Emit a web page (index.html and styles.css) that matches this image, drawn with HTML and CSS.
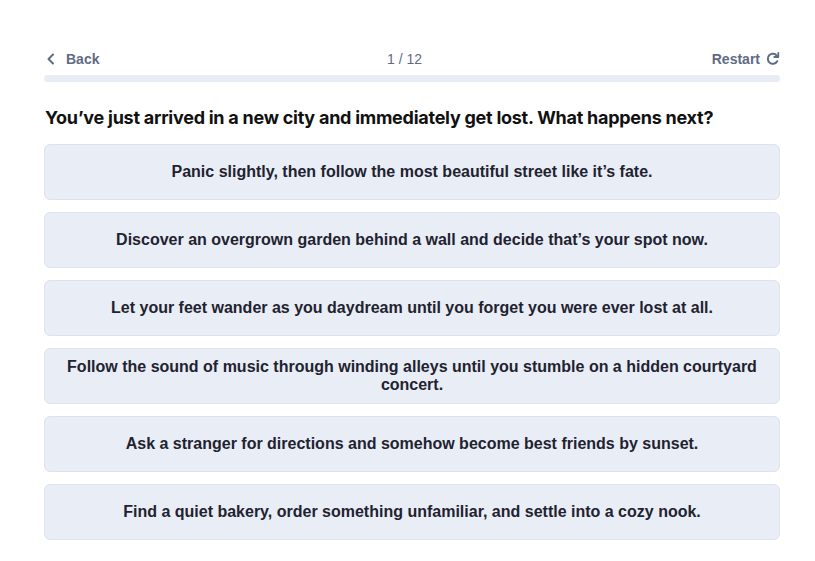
FILE: index.html
```html
<!DOCTYPE html>
<html>
<head>
<meta charset="utf-8">
<link rel="stylesheet" href="styles.css">
</head>
<body>
<div class="quiz">
  <div class="topbar">
    <button class="nav back">
      <svg width="10" height="12" viewBox="0 0 10 12"><path d="M7 1.5 L2.5 6 L7 10.5" fill="none" stroke="currentColor" stroke-width="2" stroke-linecap="round" stroke-linejoin="round"/></svg>
      <span>Back</span>
    </button>
    <div class="count">1 / 12</div>
    <button class="nav restart">
      <span>Restart</span>
      <svg width="14" height="14" viewBox="0 0 14 14"><path d="M11.2 9.2 A5 5 0 1 1 11 4" fill="none" stroke="currentColor" stroke-width="2" stroke-linecap="round"/><path d="M12.3 1 L12.3 5 L8.3 5" fill="none" stroke="currentColor" stroke-width="1.8" stroke-linecap="round" stroke-linejoin="round"/></svg>
    </button>
  </div>
  <div class="progress"><div class="fill"></div></div>
  <h1 class="question">You’ve just arrived in a new city and immediately get lost. What happens next?</h1>
  <div class="options">
    <button class="option">Panic slightly, then follow the most beautiful street like it’s fate.</button>
    <button class="option">Discover an overgrown garden behind a wall and decide that’s your spot now.</button>
    <button class="option">Let your feet wander as you daydream until you forget you were ever lost at all.</button>
    <button class="option">Follow the sound of music through winding alleys until you stumble on a hidden courtyard concert.</button>
    <button class="option">Ask a stranger for directions and somehow become best friends by sunset.</button>
    <button class="option">Find a quiet bakery, order something unfamiliar, and settle into a cozy nook.</button>
  </div>
</div>
</body>
</html>
```

FILE: styles.css
```css
* { box-sizing: border-box; }
body {
  margin: 0;
  background: #ffffff;
  font-family: "Liberation Sans", Arial, sans-serif;
}
.quiz {
  width: 736px;
  margin-left: 44px;
  padding-top: 49px;
}
.topbar {
  display: flex;
  align-items: center;
  justify-content: space-between;
  height: 20px;
}
.nav {
  display: flex;
  align-items: center;
  gap: 8px;
  background: none;
  border: none;
  padding: 0;
  font-family: "Liberation Sans", Arial, sans-serif;
  font-size: 14px;
  font-weight: bold;
  color: #5f6b85;
}
.back { padding-left: 2px; gap: 10px; }
.restart { gap: 6px; }
.count {
  font-family: "Liberation Sans", Arial, sans-serif;
  font-size: 14px;
  color: #5f6b85;
  margin-right: 2px;
}
.progress {
  margin-top: 6px;
  height: 7px;
  border-radius: 4px;
  background: #e8edf5;
}
.fill { width: 0; height: 100%; }
.question {
  margin: 24px 0 14px 1px;
  font-family: Inter, "Liberation Sans", sans-serif;
  font-size: 18px;
  font-weight: 700;
  line-height: 24px;
  letter-spacing: -0.26px;
  color: #111111;
}
.options {
  display: flex;
  flex-direction: column;
  gap: 12px;
}
.option {
  height: 56px;
  display: flex;
  align-items: center;
  justify-content: center;
  padding: 0 20px;
  background: #e9edf6;
  border: 1px solid #dde3ee;
  border-radius: 6px;
  font-family: "Liberation Sans", Arial, sans-serif;
  font-size: 16px;
  font-weight: bold;
  line-height: 18px;
  color: #1f2330;
  text-align: center;
}
```
